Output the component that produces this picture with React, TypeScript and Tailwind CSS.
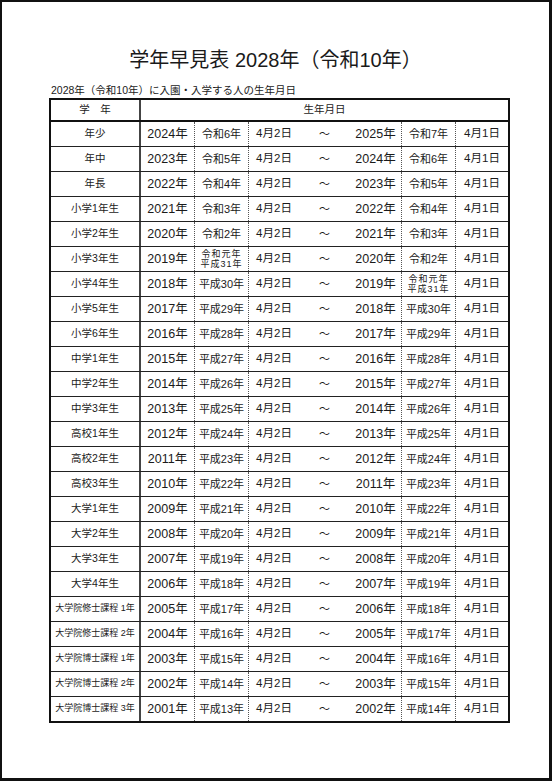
import React from 'react';

const FONT = { fontFamily: '"Liberation Sans", "Noto Sans CJK JP", sans-serif' };

interface GradeRow {
  grade: string;
  small?: boolean;
  from: number;
}

const grades: GradeRow[] = [
  { grade: '年少', from: 2024 },
  { grade: '年中', from: 2023 },
  { grade: '年長', from: 2022 },
  { grade: '小学1年生', from: 2021 },
  { grade: '小学2年生', from: 2020 },
  { grade: '小学3年生', from: 2019 },
  { grade: '小学4年生', from: 2018 },
  { grade: '小学5年生', from: 2017 },
  { grade: '小学6年生', from: 2016 },
  { grade: '中学1年生', from: 2015 },
  { grade: '中学2年生', from: 2014 },
  { grade: '中学3年生', from: 2013 },
  { grade: '高校1年生', from: 2012 },
  { grade: '高校2年生', from: 2011 },
  { grade: '高校3年生', from: 2010 },
  { grade: '大学1年生', from: 2009 },
  { grade: '大学2年生', from: 2008 },
  { grade: '大学3年生', from: 2007 },
  { grade: '大学4年生', from: 2006 },
  { grade: '大学院修士課程 1年', small: true, from: 2005 },
  { grade: '大学院修士課程 2年', small: true, from: 2004 },
  { grade: '大学院博士課程 1年', small: true, from: 2003 },
  { grade: '大学院博士課程 2年', small: true, from: 2002 },
  { grade: '大学院博士課程 3年', small: true, from: 2001 },
];

function Wareki({ year }: { year: number }) {
  if (year === 2019) {
    return (
      <div className="flex flex-col items-center text-[9px] leading-[10px] tracking-[1px]">
        <span>令和元年</span>
        <span>平成31年</span>
      </div>
    );
  }
  const label = year > 2019 ? `令和${year - 2018}年` : `平成${year - 1988}年`;
  return <span className="text-[11px]">{label}</span>;
}

export default function App() {
  return (
    <div className="w-[553px] h-[782px] bg-white text-[#1a1a1a]" style={FONT}>
      <div className="w-[552px] h-[781px] border-t-2 border-l-2 border-r-[3px] border-b-[3px] border-[#111]">
        <div className="pt-[44px] text-center text-[20px] leading-[28px]">学年早見表 2028年（令和10年）</div>

        <div className="mt-[9px] ml-[49px] text-[10.5px] leading-[14px]">2028年（令和10年）に入園・入学する人の生年月日</div>

        <div className="mt-[1px] ml-[47px] w-[461px] border-2 border-[#111]">
          <div className="grid grid-cols-[90px_1fr] h-[22px] border-b-2 border-[#111] text-[10.5px]">
            <div className="flex items-center justify-center border-r-2 border-[#444]">学　年</div>
            <div className="flex items-center justify-center">生年月日</div>
          </div>

          {grades.map((row, i) => {
            const last = i === grades.length - 1;
            return (
              <div
                key={row.grade}
                className={`grid grid-cols-[90px_54px_54px_50px_51px_52px_54px_52px] ${
                  last ? 'h-[24px]' : 'h-[25px] border-b border-[#222]'
                }`}
              >
                <div
                  className={`flex items-center justify-center border-r-2 border-[#444] ${
                    row.small ? 'text-[9px]' : 'text-[10.5px]'
                  }`}
                >
                  {row.grade}
                </div>
                <div className="flex items-center justify-center border-r border-dotted border-[#555] text-[12.5px]">
                  {row.from}年
                </div>
                <div className="flex items-center justify-center border-r border-dotted border-[#555]">
                  <Wareki year={row.from} />
                </div>
                <div className="flex items-center justify-center text-[11.5px]">4月2日</div>
                <div className="flex items-center justify-center text-[11px]">～</div>
                <div className="flex items-center justify-center border-r border-dotted border-[#555] text-[12.5px]">
                  {row.from + 1}年
                </div>
                <div className="flex items-center justify-center border-r border-dotted border-[#555]">
                  <Wareki year={row.from + 1} />
                </div>
                <div className="flex items-center justify-center text-[11.5px]">4月1日</div>
              </div>
            );
          })}
        </div>
      </div>
    </div>
  );
}
